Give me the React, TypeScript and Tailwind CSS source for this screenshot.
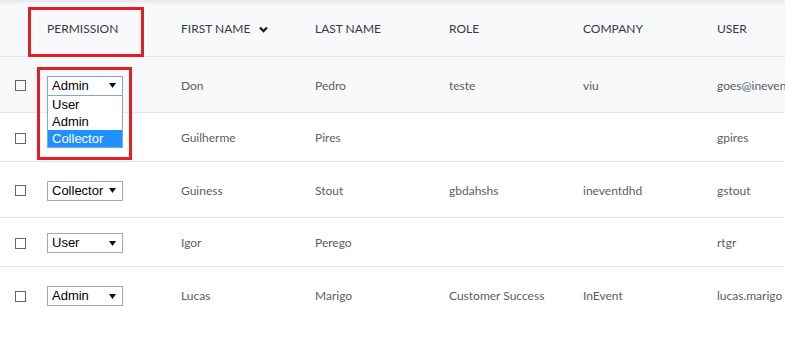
import React from "react";

type Row = {
  perm: string;
  first: string;
  last: string;
  role: string;
  company: string;
  user: string;
  h: string;
  open?: boolean;
};

const rows: Row[] = [
  { perm: "Admin", first: "Don", last: "Pedro", role: "teste", company: "viu", user: "goes@inevent.com", h: "h-[56px]", open: true },
  { perm: "Collector", first: "Guilherme", last: "Pires", role: "", company: "", user: "gpires", h: "h-[49px]" },
  { perm: "Collector", first: "Guiness", last: "Stout", role: "gbdahshs", company: "ineventdhd", user: "gstout", h: "h-[56px]" },
  { perm: "User", first: "Igor", last: "Perego", role: "", company: "", user: "rtgr", h: "h-[49px]" },
  { perm: "Admin", first: "Lucas", last: "Marigo", role: "Customer Success", company: "InEvent", user: "lucas.marigo", h: "h-[56px]" },
];

function Select({ value, open }: { value: string; open?: boolean }) {
  return (
    <div className="relative">
      <div
        className={`flex h-[20px] w-[76px] items-center justify-between border bg-white pl-[4px] pr-[6px] font-['Liberation_Sans',sans-serif] text-[13px] text-black ${
          open ? "border-[#7ea6d6]" : "border-[#a9a9a9]"
        }`}
      >
        <span>{value}</span>
        <svg width="7" height="5" viewBox="0 0 7 5">
          <polygon points="0,0 7,0 3.5,5" fill="#111" />
        </svg>
      </div>
      {open && (
        <div className="absolute left-0 top-[20px] z-10 w-[76px] border border-t-0 border-[#7ea6d6] bg-white font-['Liberation_Sans',sans-serif] text-[13px] leading-[17px] text-black">
          <div className="pl-[4px]">User</div>
          <div className="pl-[4px]">Admin</div>
          <div className="bg-[#1e90ff] pl-[4px] text-white">Collector</div>
        </div>
      )}
    </div>
  );
}

function Cell({ children }: { children?: React.ReactNode }) {
  return <div className="w-[134px] shrink-0 whitespace-nowrap">{children}</div>;
}

export default function App() {
  return (
    <div className="relative h-[346px] w-[785px] overflow-hidden bg-white font-['Lato',sans-serif] text-[12px]">
      {/* Header */}
      <div className="flex h-[57px] items-center border-b border-[#e3e5e8] bg-[#f8f9fb] pt-[2px] text-[#363a42] shadow-[inset_0_5px_4px_-3px_rgba(0,0,0,0.08)]">
        <div className="w-[47px] shrink-0" />
        <Cell>PERMISSION</Cell>
        <Cell>
          <span className="flex items-center gap-[9px]">
            FIRST NAME
            <svg width="9" height="7" viewBox="0 0 9 7">
              <path d="M1 1.5 L4.5 5 L8 1.5" fill="none" stroke="#222" strokeWidth="2.4" />
            </svg>
          </span>
        </Cell>
        <Cell>LAST NAME</Cell>
        <Cell>ROLE</Cell>
        <Cell>COMPANY</Cell>
        <Cell>USER</Cell>
      </div>

      {/* Rows */}
      {rows.map((r, i) => (
        <div
          key={i}
          className={`flex items-center pt-[2px] text-[#5b5e64] ${r.h} ${i < rows.length - 1 ? "border-b border-[#e3e5e8]" : ""} ${
            r.open ? "relative z-10 bg-[#f8f9fb]" : "bg-white"
          }`}
        >
          <div className="flex w-[47px] shrink-0 pl-[15px]">
            <span className="h-[11px] w-[11px] border border-[#666]" />
          </div>
          <Cell>
            <Select value={r.perm} open={r.open} />
          </Cell>
          <Cell>{r.first}</Cell>
          <Cell>{r.last}</Cell>
          <Cell>{r.role}</Cell>
          <Cell>{r.company}</Cell>
          <Cell>{r.user}</Cell>
        </div>
      ))}

      {/* Annotation boxes */}
      <div className="pointer-events-none absolute left-[28px] top-[7px] z-20 h-[50px] w-[116px] border-[3px] border-[#e31e24]" />
      <div className="pointer-events-none absolute left-[37px] top-[67px] z-20 h-[93px] w-[95px] border-[3px] border-[#e31e24]" />
    </div>
  );
}
